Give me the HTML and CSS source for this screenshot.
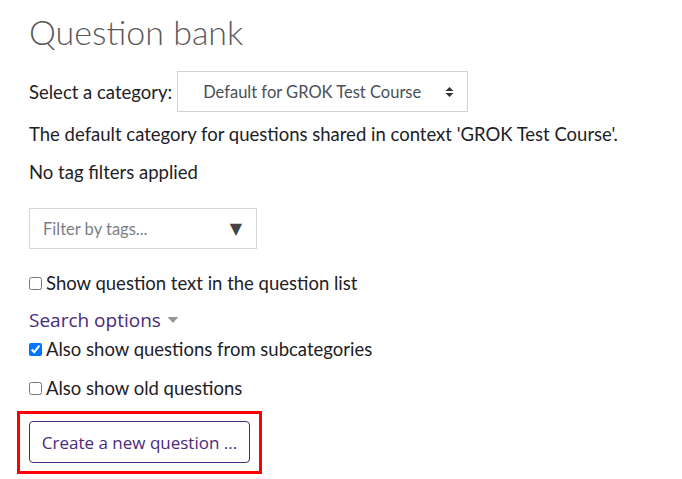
FILE: index.html
```html
<!DOCTYPE html>
<html>
<head>
<meta charset="utf-8">
<link rel="stylesheet" href="styles.css">
</head>
<body>
<div class="page">
  <h2 class="title">Question bank</h2>
  <div class="cat-row">
    <label class="cat-label">Select a category:</label>
    <div class="select">
      <span class="select-text">Default for GROK Test Course</span>
      <svg class="select-arrows" width="9" height="12" viewBox="0 0 9 12"><path d="M4.5 1 L8.5 5 L0.5 5 Z M0.5 7 L8.5 7 L4.5 11 Z" fill="#333"/></svg>
    </div>
  </div>
  <p class="line desc">The default category for questions shared in context 'GROK Test Course'.</p>
  <p class="line notag">No tag filters applied</p>
  <div class="filter">
    <span class="filter-text">Filter by tags...</span>
    <span class="filter-arrow">▼</span>
  </div>
  <label class="check show-text"><input type="checkbox"> Show question text in the question list</label>
  <div class="search-opts">Search options <svg class="caret" width="12" height="8" viewBox="0 0 12 8"><path d="M0.5 1 L11.5 1 L6 7 Z" fill="#999"/></svg></div>
  <label class="check sub"><input type="checkbox" checked> Also show questions from subcategories</label>
  <label class="check old"><input type="checkbox"> Also show old questions</label>
  <div class="highlight">
    <button class="create-btn">Create a new question ...</button>
  </div>
</div>
</body>
</html>
```
FILE: styles.css
```css
html, body {
  margin: 0;
  padding: 0;
  background: #fff;
}
body {
  font-family: "Lato", "Liberation Sans", sans-serif;
  font-size: 18.5px;
  color: #1d2125;
}
.page {
  padding: 12px 0 0 29px;
  display: flex;
  flex-direction: column;
  align-items: flex-start;
}
.title {
  margin: 0;
  font-family: "Lato", sans-serif;
  font-weight: 300;
  font-size: 34px;
  line-height: 40px;
  color: #5a5a5a;
}
.cat-row {
  margin-top: 19px;
  display: flex;
  align-items: center;
  gap: 5px;
}
.select {
  height: 39px;
  border: 1px solid #d0d4da;
  display: flex;
  align-items: center;
  justify-content: space-between;
  padding: 0 13px 0 25px;
  box-sizing: content-box;
  width: 251px;
}
.select-text {
  font-size: 16.5px;
  color: #495057;
}
.line {
  margin: 0;
  line-height: 24px;
}
.desc {
  margin-top: 10px;
}
.notag {
  margin-top: 14px;
}
.filter {
  margin-top: 24px;
  width: 199px;
  height: 39px;
  border: 1px solid #d5d7dc;
  display: flex;
  align-items: center;
  justify-content: space-between;
  padding: 0 14px 0 13px;
}
.filter-text {
  font-size: 16.5px;
  color: #7b7f85;
}
.filter-arrow {
  font-size: 16px;
  color: #444;
  font-family: "DejaVu Sans", sans-serif;
}
.check {
  display: flex;
  align-items: center;
  gap: 4px;
  line-height: 24px;
}
.check input {
  margin: 0;
  width: 13px;
  height: 13px;
}
.show-text {
  margin-top: 22px;
}
.search-opts {
  margin-top: 13px;
  font-family: "Open Sans", sans-serif;
  font-size: 19px;
  color: #4a2a7a;
  display: flex;
  align-items: center;
  gap: 6px;
  line-height: 24px;
}
.sub {
  margin-top: 5px;
}
.old {
  margin-top: 15px;
}
.highlight {
  margin: 11px 0 0 -12px;
  border: 3px solid #ff0000;
  padding: 7px 9px 8px 9px;
}
.create-btn {
  font-family: "Open Sans", sans-serif;
  font-size: 17px;
  color: #4a2a7a;
  background: #fff;
  border: 1px solid #4a2a7a;
  border-radius: 4px;
  padding: 0 10px;
  height: 42px;
  width: 221px;
}
```
